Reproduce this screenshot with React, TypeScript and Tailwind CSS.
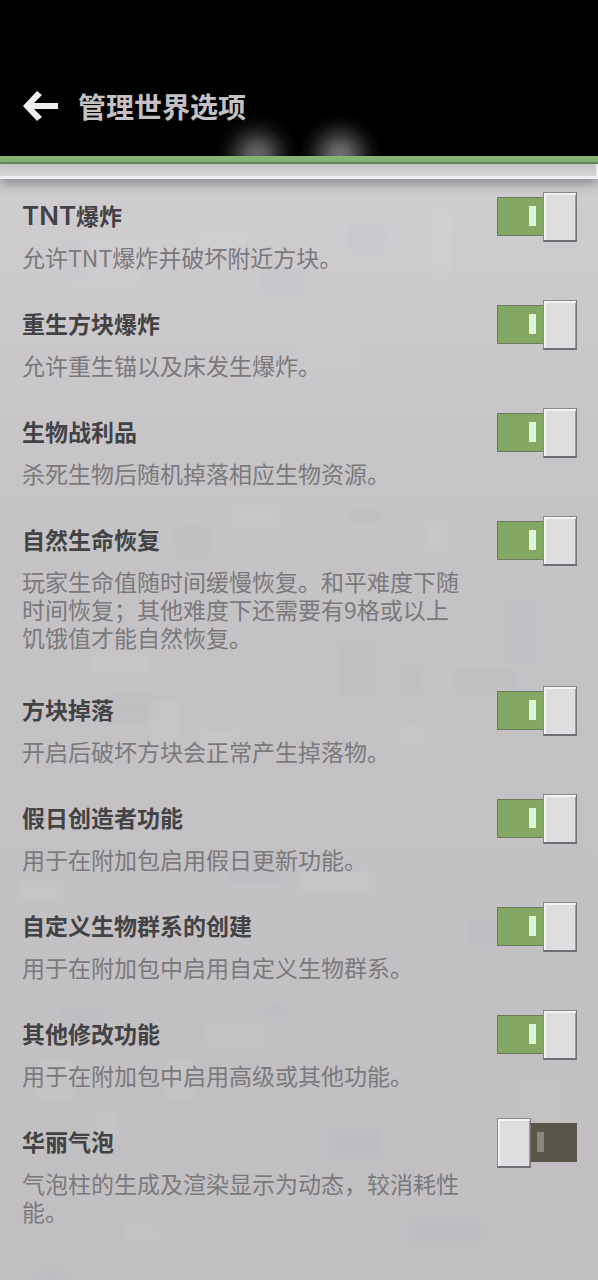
import { useState } from "react";

type Option = {
  id: string;
  prefix?: string;
  title: string;
  description: string;
  enabled: boolean;
  roomy?: boolean;
};

const OPTIONS: Option[] = [
  { id: "tnt", prefix: "TNT", title: "爆炸", description: "允许TNT爆炸并破坏附近方块。", enabled: true },
  { id: "respawn", title: "重生方块爆炸", description: "允许重生锚以及床发生爆炸。", enabled: true },
  { id: "loot", title: "生物战利品", description: "杀死生物后随机掉落相应生物资源。", enabled: true },
  {
    id: "regen",
    title: "自然生命恢复",
    description: "玩家生命值随时间缓慢恢复。和平难度下随时间恢复；其他难度下还需要有9格或以上饥饿值才能自然恢复。",
    enabled: true,
    roomy: true,
  },
  { id: "drops", title: "方块掉落", description: "开启后破坏方块会正常产生掉落物。", enabled: true },
  { id: "creator", title: "假日创造者功能", description: "用于在附加包启用假日更新功能。", enabled: true },
  { id: "biomes", title: "自定义生物群系的创建", description: "用于在附加包中启用自定义生物群系。", enabled: true },
  { id: "other", title: "其他修改功能", description: "用于在附加包中启用高级或其他功能。", enabled: true },
  {
    id: "bubbles",
    title: "华丽气泡",
    description: "气泡柱的生成及渲染显示为动态，较消耗性能。",
    enabled: false,
    roomy: true,
  },
];

function Toggle({ id, checked, onChange }: { id: string; checked: boolean; onChange: (v: boolean) => void }) {
  return (
    <div className="relative h-[50px] w-20 shrink-0 pt-[5px]">
      <input
        id={id}
        type="checkbox"
        role="switch"
        checked={checked}
        onChange={(e) => onChange(e.target.checked)}
        className="block h-[39px] w-full cursor-pointer appearance-none border border-[#5a564a] bg-[#5a564a] checked:border-[#6f7a5e] checked:bg-[#82a863]"
      />
      <span
        className={
          checked
            ? "pointer-events-none absolute left-8 top-[14px] h-5 w-[7px] bg-[#e0f3d3]"
            : "pointer-events-none absolute left-10 top-[14px] h-5 w-[7px] bg-[#8a877f]"
        }
      />
      <span
        className={
          checked
            ? "pointer-events-none absolute right-0 top-0 h-[50px] w-[34px] border border-b-2 border-[#8b898d] border-r-[#77757a] border-b-[#706e72] bg-[#dfdde0] shadow-[inset_2px_2px_0_#f4f3f5,inset_-1px_0_0_#9b999d]"
            : "pointer-events-none absolute left-0 top-0 h-[50px] w-[34px] border border-b-2 border-[#8b898d] border-r-[#77757a] border-b-[#706e72] bg-[#dfdde0] shadow-[inset_2px_2px_0_#f4f3f5,inset_-1px_0_0_#9b999d]"
        }
      />
    </div>
  );
}

function StoneTexture() {
  return (
    <svg
      aria-hidden="true"
      className="pointer-events-none absolute inset-0 h-full w-full blur-[2px]"
      viewBox="0 0 598 1100"
      preserveAspectRatio="none"
    >
      <g fill="#ffffff" opacity="0.05">
        <path d="M70 60h120v24h-50v20h-70zM430 35h22v60h-22zM200 50h46v22h-46zM300 165h60v26h-60zM510 130h40v18h-40z" />
        <path d="M230 330h50v20h-50zM425 345h22v30h-22zM90 470h60v24h-60zM150 520h30v45h-30zM200 550h40v26h-40zM400 545h23v20h-23z" />
        <path d="M20 700h44v22h-44zM300 690h70v24h-70zM205 845h60v22h-60zM35 880h40v42h-40zM95 930h22v28h-22zM165 880h30v40h-30zM520 900h40v40h-40zM125 1045h34v16h-34z" />
      </g>
      <g fill="#69656c" opacity="0.025">
        <path d="M66 60h22v40h-22zM260 90h44v24h-44zM350 45h35v25h-35zM175 345h35v32h-35zM350 330h30v14h-30z" />
        <path d="M340 462h34v54h-34zM505 420h30v60h-30zM400 488h20v24h-20zM105 515h54v28h-54zM455 490h60v22h-60z" />
        <path d="M230 680h50v24h-50zM470 740h50v26h-50zM265 825h22v14h-22zM60 830h44v24h-44zM330 950h50v30h-50zM40 1090h24v10h-24zM410 1040h70v22h-70z" />
      </g>
    </svg>
  );
}

export default function App() {
  const [values, setValues] = useState<Record<string, boolean>>(() =>
    Object.fromEntries(OPTIONS.map((o) => [o.id, o.enabled])),
  );

  return (
    <div
      lang="zh-CN"
      className="flex min-h-screen flex-col bg-[#c1bfc2] font-['Noto_Sans_CJK_SC',sans-serif] text-[#434244]"
    >
      <header className="relative z-10">
        <div className="flex items-center gap-5 bg-black bg-[radial-gradient(circle_at_257px_156px,#686568_0,#585558_10px,#2a292a_22px,#0c0c0c_32px,transparent_42px),radial-gradient(circle_at_340px_156px,#757275_0,#615e61_10px,#302f30_22px,#0f0f0f_32px,transparent_42px)] px-[22px] pt-[86px] pb-[30px]">
          <button type="button" aria-label="返回" className="flex h-10 w-9 cursor-pointer items-center">
            <svg viewBox="0 0 36 32" className="h-8 w-9" aria-hidden="true">
              <path d="M1 16 15 1l5 4-8 8h24v6H12l8 8-5 4z" fill="#f0eff1" />
            </svg>
          </button>
          <h1 className="text-[28px] leading-10 font-bold text-[#c3c1c4]">管理世界选项</h1>
        </div>
        <div className="h-2 border-b-2 border-[#66905a] bg-[#87b874]" />
        <div className="h-[15px] border-r-2 border-b-[3px] border-[#efedf0] bg-linear-to-b from-[#c3c1c4] to-[#d9d7da] shadow-[0_4px_12px_rgba(60,56,62,0.5)]" />
      </header>

      <main className="relative grow bg-linear-to-b from-[#cfcdd0] via-[#c5c3c6] via-30% to-[#c1bfc2]">
        <StoneTexture />
        <ul className="relative pt-px">
          {OPTIONS.map((o) => (
            <li
              key={o.id}
              className={
                o.roomy
                  ? "flex items-start gap-8 pt-3 pr-[21px] pb-[23px] pl-[22px]"
                  : "flex items-start gap-8 pt-3 pr-[21px] pb-[17px] pl-[22px]"
              }
            >
              <div className="grow pt-[9px]">
                <label htmlFor={o.id} className="block text-[23px] leading-7 font-bold">
                  {o.prefix && <span className="font-['Inter'] text-[26px] leading-none font-semibold">{o.prefix}</span>}
                  {o.title}
                </label>
                <p className="pt-[14px] text-[23px] leading-7 font-normal text-[#7b797c]">{o.description}</p>
              </div>
              <Toggle
                id={o.id}
                checked={values[o.id]}
                onChange={(v) => setValues((prev) => ({ ...prev, [o.id]: v }))}
              />
            </li>
          ))}
        </ul>
      </main>
    </div>
  );
}
